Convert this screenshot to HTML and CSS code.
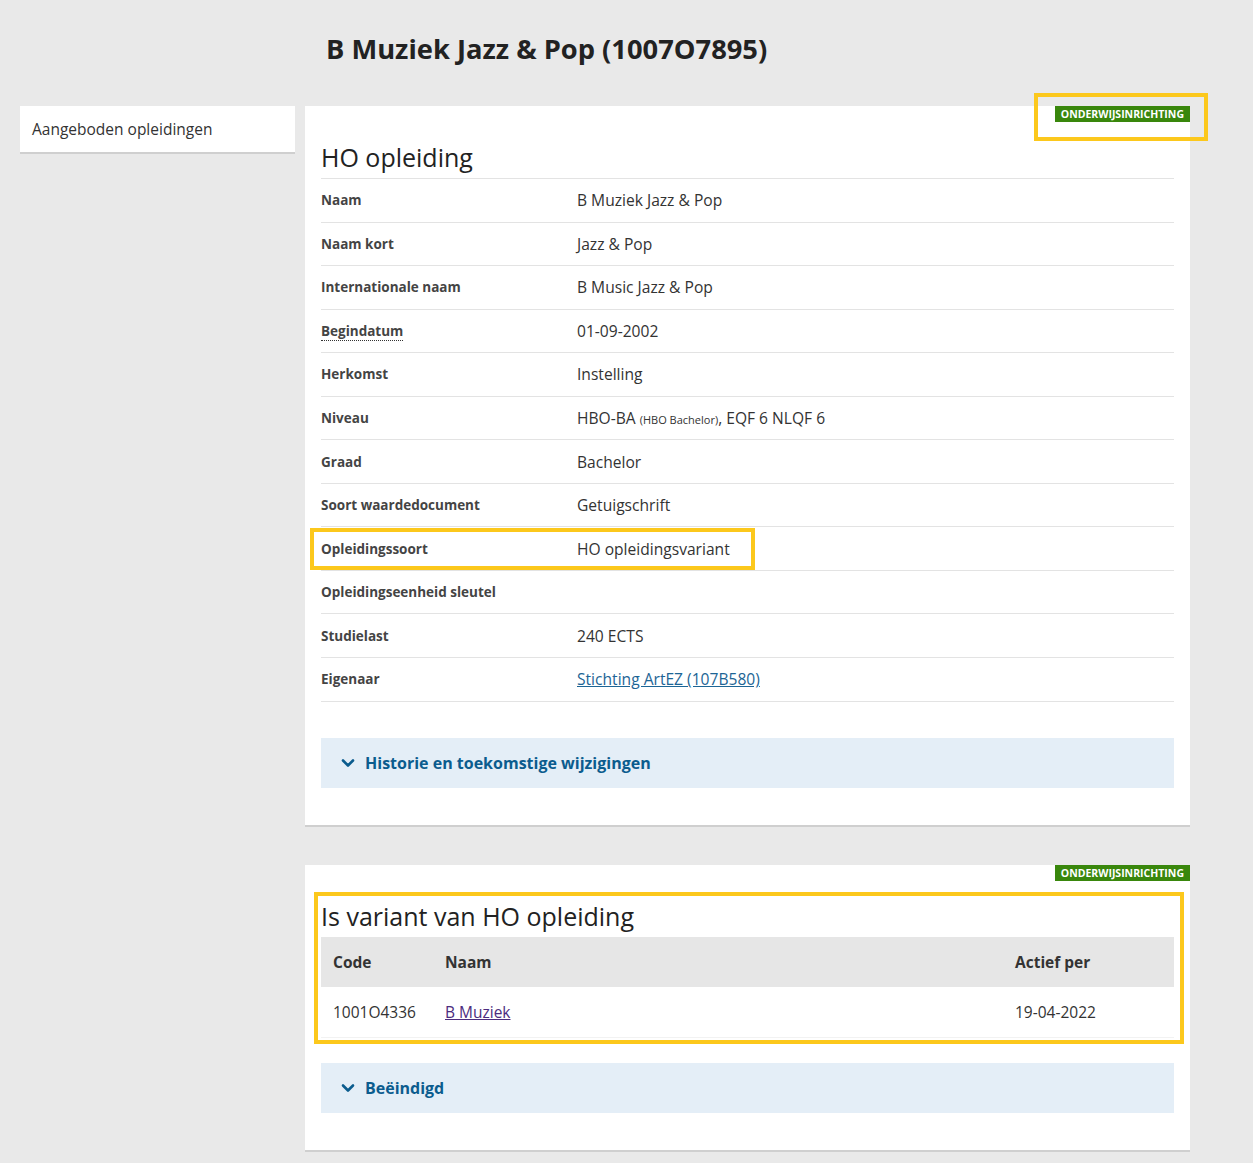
FILE: index.html
```html
<!DOCTYPE html>
<html lang="nl">
<head>
<meta charset="utf-8">
<title>B Muziek Jazz &amp; Pop (1007O7895)</title>
<link rel="stylesheet" href="styles.css">
</head>
<body>
<header class="page-header">
  <h1>B Muziek Jazz &amp; Pop (1007O7895)</h1>
</header>
<div class="layout">
  <nav class="sidebar">
    <a class="side-item" href="#">Aangeboden opleidingen</a>
  </nav>
  <main class="main">
    <section class="card">
      <span class="badge">ONDERWIJSINRICHTING</span>
      <span class="mark mark-badge1"></span>
      <h2 class="card-title">HO opleiding</h2>
      <div class="props">
        <div class="row"><div class="label">Naam</div><div class="value">B Muziek Jazz &amp; Pop</div></div>
        <div class="row"><div class="label">Naam kort</div><div class="value">Jazz &amp; Pop</div></div>
        <div class="row"><div class="label">Internationale naam</div><div class="value">B Music Jazz &amp; Pop</div></div>
        <div class="row"><div class="label"><abbr class="abbr">Begindatum</abbr></div><div class="value">01-09-2002</div></div>
        <div class="row"><div class="label">Herkomst</div><div class="value">Instelling</div></div>
        <div class="row"><div class="label">Niveau</div><div class="value">HBO-BA <small class="small">(HBO Bachelor)</small>, EQF 6 NLQF 6</div></div>
        <div class="row"><div class="label">Graad</div><div class="value">Bachelor</div></div>
        <div class="row"><div class="label">Soort waardedocument</div><div class="value">Getuigschrift</div></div>
        <div class="row"><div class="label">Opleidingssoort</div><div class="value">HO opleidingsvariant</div></div>
        <div class="row"><div class="label">Opleidingseenheid sleutel</div><div class="value"></div></div>
        <div class="row"><div class="label">Studielast</div><div class="value">240 ECTS</div></div>
        <div class="row"><div class="label">Eigenaar</div><div class="value"><a class="link" href="#">Stichting ArtEZ (107B580)</a></div></div>
      </div>
      <span class="mark mark-row"></span>
      <button class="expander" type="button">
        <svg class="chev" width="14" height="10" viewBox="0 0 14 10"><path d="M2 2.5 L7 7.5 L12 2.5" fill="none" stroke="currentColor" stroke-width="2.6" stroke-linecap="round" stroke-linejoin="round"/></svg>
        <span>Historie en toekomstige wijzigingen</span>
      </button>
    </section>

    <section class="card card2">
      <span class="badge">ONDERWIJSINRICHTING</span>
      <h2 class="card-title">Is variant van HO opleiding</h2>
      <table class="table">
        <thead>
          <tr><th class="col-code">Code</th><th>Naam</th><th class="col-date">Actief per</th></tr>
        </thead>
        <tbody>
          <tr><td>1001O4336</td><td><a class="link visited" href="#">B Muziek</a></td><td>19-04-2022</td></tr>
        </tbody>
      </table>
      <span class="mark mark-table"></span>
      <button class="expander expander2" type="button">
        <svg class="chev" width="14" height="10" viewBox="0 0 14 10"><path d="M2 2.5 L7 7.5 L12 2.5" fill="none" stroke="currentColor" stroke-width="2.6" stroke-linecap="round" stroke-linejoin="round"/></svg>
        <span>Beëindigd</span>
      </button>
    </section>
  </main>
</div>
</body>
</html>
```

FILE: styles.css
```css
html, body {
  margin: 0;
  padding: 0;
}
body {
  background: #e9e9e9;
  font-family: "Open Sans", "Noto Sans", sans-serif;
  color: #333;
  width: 1253px;
  min-height: 1163px;
}
.page-header {
  height: 106px;
  display: flex;
  align-items: center;
  padding-left: 326px;
  box-sizing: border-box;
  padding-bottom: 10px;
}
.page-header h1 {
  margin: 0;
  font-size: 27.3px;
  font-weight: 700;
  color: #222;
  letter-spacing: 0;
}
.layout {
  display: flex;
  gap: 10px;
  padding-left: 20px;
  align-items: flex-start;
}
.sidebar {
  width: 275px;
  background: #fff;
  border-bottom: 2px solid #cfcfcf;
}
.side-item {
  display: block;
  padding: 12px 12px;
  height: 22px;
  line-height: 22px;
  font-size: 15.5px;
  color: #333;
  text-decoration: none;
}
.main {
  width: 885px;
  display: flex;
  flex-direction: column;
  gap: 38px;
}
.card {
  position: relative;
  background: #fff;
  border-bottom: 2px solid #cfcfcf;
  padding: 30px 16px 37px;
}
.card-title {
  margin: 0;
  font-size: 25px;
  font-weight: 400;
  line-height: 42px;
  color: #222;
}
.badge {
  position: absolute;
  top: 0;
  right: 0;
  background: #39870c;
  color: #fff;
  font-size: 10.5px;
  font-weight: 700;
  line-height: 16px;
  padding: 0 6px;
  letter-spacing: 0;
}
.props {
  border-top: 1px solid #e3e3e3;
}
.row {
  display: flex;
  height: 42.55px;
  align-items: center;
  border-bottom: 1px solid #e3e3e3;
}
.label {
  width: 256px;
  font-size: 13.5px;
  font-weight: 700;
  color: #444;
}
.value {
  font-size: 15.6px;
  color: #333;
}
.abbr {
  text-decoration: none;
  border-bottom: 1px dotted #333;
}
.small {
  font-size: 11px;
}
.link {
  color: #1d6595;
  text-decoration: underline;
}
.link.visited {
  color: #4c2c7e;
}
.expander {
  display: flex;
  align-items: center;
  gap: 10px;
  width: 100%;
  height: 50px;
  margin-top: 36px;
  border: 0;
  background: #e4eef7;
  padding: 0 20px;
  font-family: inherit;
  font-size: 16px;
  font-weight: 700;
  color: #0b5c8e;
  text-align: left;
  cursor: pointer;
}
.expander2 {
  margin-top: 25px;
}
.chev {
  display: block;
}
.table {
  width: 100%;
  border-collapse: collapse;
}
.table th {
  background: #e6e6e6;
  height: 50px;
  text-align: left;
  font-size: 15.5px;
  font-weight: 700;
  color: #333;
  padding: 0 12px;
}
.table td {
  height: 50px;
  font-size: 15.5px;
  color: #333;
  padding: 0 12px;
  border-bottom: 1px solid #f2f2f2;
}
.col-code {
  width: 88px;
}
.col-date {
  width: 147px;
}
.mark {
  position: absolute;
  border: 4px solid #fcc81c;
  box-sizing: border-box;
  pointer-events: none;
}
.mark-badge1 {
  left: 729px;
  top: -13px;
  width: 174px;
  height: 48px;
}
.mark-row {
  left: 5px;
  top: 422px;
  width: 445px;
  height: 42px;
}
.mark-table {
  left: 9px;
  top: 27px;
  width: 870px;
  height: 152px;
}
```
